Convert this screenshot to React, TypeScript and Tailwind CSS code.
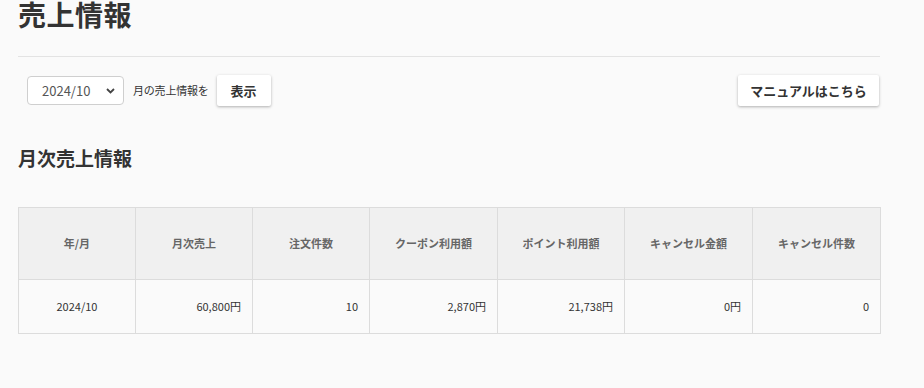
import React from "react";

const cols = [
  { label: "年/月", w: 117, v: "2024/10", align: "center" },
  { label: "月次売上", w: 117, v: "60,800円", align: "right" },
  { label: "注文件数", w: 117, v: "10", align: "right" },
  { label: "クーポン利用額", w: 128, v: "2,870円", align: "right" },
  { label: "ポイント利用額", w: 127, v: "21,738円", align: "right" },
  { label: "キャンセル金額", w: 128, v: "0円", align: "right" },
  { label: "キャンセル件数", w: 128, v: "0", align: "right" },
];

export default function App() {
  return (
    <div
      className="w-[924px] h-[388px] bg-[#fafafa] text-[#333] overflow-hidden"
      style={{ fontFamily: '"Noto Sans CJK JP", "Noto Sans", sans-serif' }}
    >
      <div className="pl-[18px] pr-[44px]">
        <h1 className="text-[28px] leading-[28px] font-bold text-[#333] tracking-[0.5px] pt-0">売上情報</h1>
        <div className="mt-[28px] border-t border-[#e3e3e3]" />
        <div className="mt-[18px] flex items-center justify-between">
          <div className="flex items-center">
            <div className="ml-[9px] w-[97px] h-[29px] rounded-[4px] border border-[#cfcfcf] bg-white flex items-center justify-between pl-[14px] pr-[8px]">
              <span className="text-[13px] text-[#555] leading-none">2024/10</span>
              <svg width="9" height="6" viewBox="0 0 9 6">
                <path d="M1 1 L4.5 4.5 L8 1" fill="none" stroke="#444" strokeWidth="1.8" />
              </svg>
            </div>
            <span className="ml-[9px] text-[11px] text-[#333] tracking-[-0.2px]">月の売上情報を</span>
            <button className="ml-[8px] w-[54px] h-[31px] bg-white rounded-[2px] shadow-[0_1px_3px_rgba(0,0,0,0.3)] text-[13px] font-bold text-[#333]">
              表示
            </button>
          </div>
          <button className="mr-[1px] w-[141px] h-[31px] bg-white rounded-[2px] shadow-[0_1px_3px_rgba(0,0,0,0.3)] text-[13px] font-bold text-[#333]">
            マニュアルはこちら
          </button>
        </div>
        <h2 className="mt-[40px] text-[19px] leading-[24px] font-bold text-[#333]">月次売上情報</h2>
        <table className="mt-[37px] border-collapse w-[862px] table-fixed">
          <thead>
            <tr>
              {cols.map((c) => (
                <th
                  key={c.label}
                  style={{ width: c.w }}
                  className="h-[72px] bg-[#f0f0f0] border border-[#dcdcdc] text-[11px] font-bold text-[#666] text-center p-0"
                >
                  {c.label}
                </th>
              ))}
            </tr>
          </thead>
          <tbody>
            <tr>
              {cols.map((c) => (
                <td
                  key={c.label}
                  className={`h-[54px] border border-[#dcdcdc] text-[11px] text-[#333] px-[11px] py-0 ${
                    c.align === "center" ? "text-center" : "text-right"
                  }`}
                >
                  {c.v}
                </td>
              ))}
            </tr>
          </tbody>
        </table>
      </div>
    </div>
  );
}
